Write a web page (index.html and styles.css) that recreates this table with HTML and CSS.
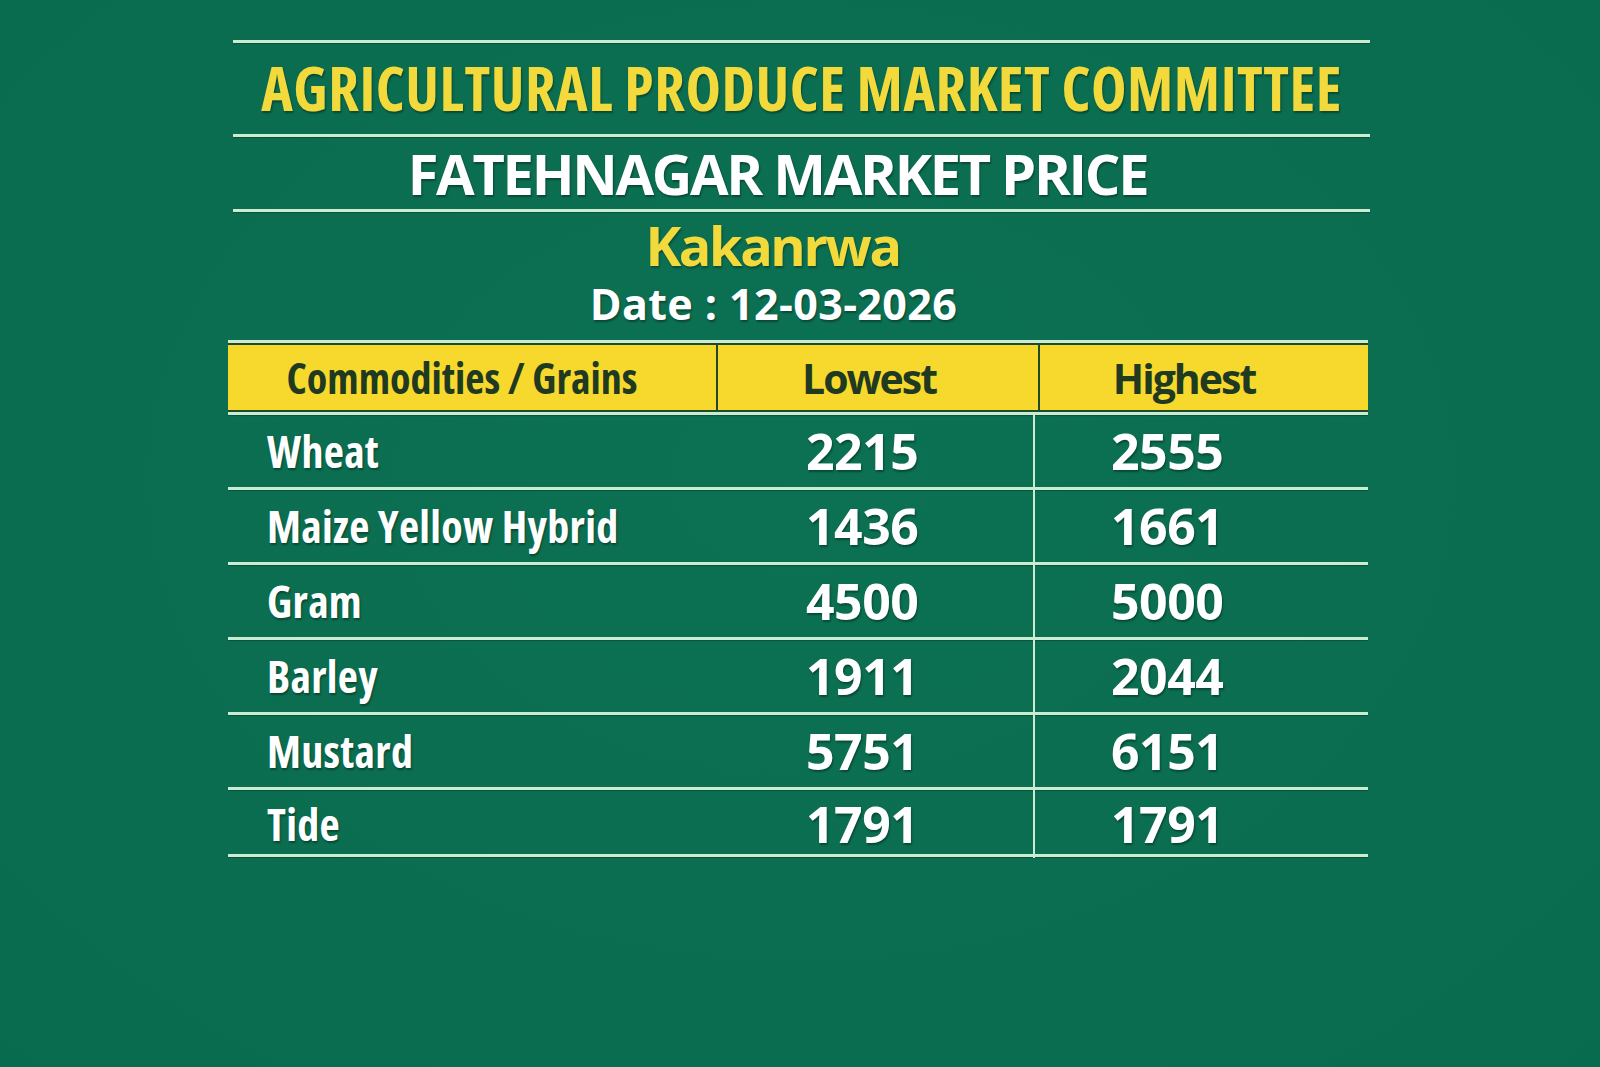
FILE: index.html
```html
<!DOCTYPE html>
<html>
<head>
<meta charset="utf-8">
<link rel="stylesheet" href="styles.css">
</head>
<body>
<div class="board">
  <div class="rule"></div>
  <h1 class="title">AGRICULTURAL PRODUCE MARKET COMMITTEE</h1>
  <div class="rule"></div>
  <h2 class="subtitle">FATEHNAGAR MARKET PRICE</h2>
  <div class="rule"></div>
  <div class="place">Kakanrwa</div>
  <div class="date">Date : 12-03-2026</div>

  <div class="table">
    <div class="rule"></div>
    <div class="head">
      <div class="hcell c1">Commodities / Grains</div>
      <div class="hcell c2">Lowest</div>
      <div class="hcell c3">Highest</div>
    </div>
    <div class="rule"></div>
    <div class="row"><div class="name">Wheat</div><div class="low">2215</div><div class="high">2555</div></div>
    <div class="rule"></div>
    <div class="row"><div class="name">Maize Yellow Hybrid</div><div class="low">1436</div><div class="high">1661</div></div>
    <div class="rule"></div>
    <div class="row"><div class="name">Gram</div><div class="low">4500</div><div class="high">5000</div></div>
    <div class="rule"></div>
    <div class="row"><div class="name">Barley</div><div class="low">1911</div><div class="high">2044</div></div>
    <div class="rule"></div>
    <div class="row"><div class="name">Mustard</div><div class="low">5751</div><div class="high">6151</div></div>
    <div class="rule"></div>
    <div class="row last"><div class="name">Tide</div><div class="low">1791</div><div class="high">1791</div></div>
    <div class="rule"></div>
  </div>
</div>
</body>
</html>
```

FILE: styles.css
```css
html, body {
  margin: 0;
  padding: 0;
}
body {
  width: 1600px;
  height: 1067px;
  overflow: hidden;
  background: radial-gradient(ellipse at 50% 45%, #0c7052 0%, #0b6e50 55%, #096b4d 100%);
  font-family: "Open Sans", "DejaVu Sans Condensed", sans-serif;
  font-stretch: 75%;
  font-weight: 700;
}
.board {
  width: 1137px;
  margin-left: 233px;
  padding-top: 40px;
}
.rule {
  height: 3px;
  background: #c9ecd3;
  box-shadow: 0 1px 1px rgba(0,0,0,0.25);
}
.title {
  margin: 0;
  height: 91px;
  display: flex;
  align-items: center;
  justify-content: center;
  color: #f3da3c;
  font-size: 60px;
  font-weight: 700;
  letter-spacing: 0.5px;
  text-shadow: 1px 2px 2px rgba(0,0,0,0.35);
  padding-bottom: 2px;
  box-sizing: border-box;
}
.subtitle {
  margin: 0;
  height: 72px;
  display: flex;
  align-items: center;
  justify-content: center;
  color: #ffffff;
  font-size: 56px;
  font-weight: 700;
  font-stretch: 100%;
  letter-spacing: -2.3px;
  padding-right: 48px;
  text-shadow: 1px 2px 2px rgba(0,0,0,0.35);
}
.place {
  text-align: center;
  color: #f3da3c;
  font-size: 54px;
  font-stretch: 100%;
  letter-spacing: -2.4px;
  line-height: 66px;
  padding-right: 58px;
  text-shadow: 1px 2px 2px rgba(0,0,0,0.3);
}
.date {
  text-align: center;
  color: #ffffff;
  font-size: 43px;
  font-stretch: 100%;
  letter-spacing: 0.4px;
  line-height: 52px;
  padding-right: 56px;
  text-shadow: 1px 2px 2px rgba(0,0,0,0.35);
}
.table {
  margin-left: -5px;
  width: 1140px;
  margin-top: 10px;
}
.head {
  display: grid;
  grid-template-columns: 488px 322px 330px;
  height: 65px;
  background: #f6d92c;
  border-top: 2px solid #1f4a2c;
  border-bottom: 2px solid #1f4a2c;
}
.hcell {
  display: flex;
  align-items: center;
  justify-content: center;
  color: #1f3a20;
  font-size: 41px;
  font-stretch: 100%;
  letter-spacing: -2px;
  border-left: 2px solid #1f4a2c;
}
.hcell.c1 {
  border-left: none;
  font-stretch: 75%;
  font-size: 42px;
  letter-spacing: 0;
  padding-right: 20px;
}
.hcell.c2 {
  padding-right: 18px;
}
.hcell.c3 {
  padding-right: 40px;
}
.row {
  display: grid;
  grid-template-columns: 488px 317px 335px;
  height: 72px;
  color: #ffffff;
  text-shadow: 1px 2px 2px rgba(0,0,0,0.35);
}
.row.last {
  height: 64px;
}
.name {
  display: flex;
  align-items: center;
  padding-left: 39px;
  font-size: 44px;
  letter-spacing: 0.3px;
}
.low {
  display: flex;
  align-items: center;
  padding-left: 90px;
  font-size: 50px;
  font-stretch: 100%;
  letter-spacing: -0.5px;
}
.high {
  display: flex;
  align-items: center;
  padding-left: 76px;
  font-size: 50px;
  font-stretch: 100%;
  letter-spacing: -0.5px;
  border-left: 2px solid #c9ecd3;
}
```
